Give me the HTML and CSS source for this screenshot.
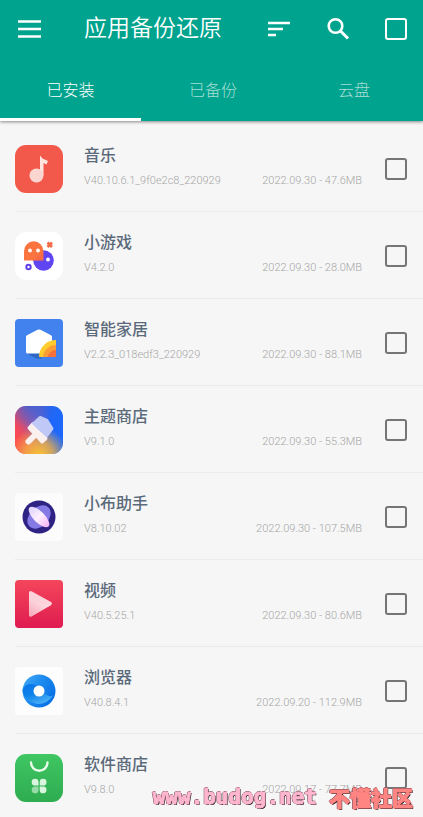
FILE: index.html
```html
<!DOCTYPE html>
<html lang="zh-CN">
<head>
<meta charset="utf-8">
<meta name="viewport" content="width=device-width, initial-scale=1">
<title>应用备份还原</title>
<link rel="stylesheet" href="styles.css">
</head>
<body>
<div class="app">
  <header class="header">
    <div class="toolbar">
      <button class="icon-button" type="button" aria-label="菜单">
        <svg viewBox="0 0 24 24" width="24" height="24"><path d="M1 4.500h23M1 12h23M1 19.500h23" stroke="#fff" stroke-width="2.600"/></svg>
      </button>
      <h1 class="title">应用备份还原</h1>
      <div class="actions">
        <button class="icon-button" type="button" aria-label="排序">
          <svg viewBox="0 0 24 24" width="24" height="24"><path d="M1 6h22M1 12h15M1 18h8" stroke="#fff" stroke-width="2.400"/></svg>
        </button>
        <button class="icon-button" type="button" aria-label="搜索">
          <svg viewBox="0 0 24 24" width="24" height="24" fill="none" stroke="#fff"><circle cx="9.500" cy="9" r="6.800" stroke-width="2.600"/><path d="M14.500 14l7.500 7.500" stroke-width="3"/></svg>
        </button>
        <input class="check check-light" type="checkbox" aria-label="全选">
      </div>
    </div>
    <nav class="tabs">
      <a class="tab tab-active" href="#installed">已安装</a>
      <a class="tab" href="#backup">已备份</a>
      <a class="tab" href="#cloud">云盘</a>
    </nav>
  </header>

  <ul class="list" id="installed">
    <li class="row">
      <svg class="app-icon" viewBox="0 0 48 48">
        <rect width="48" height="48" rx="11" fill="#f2594b"/>
        <path d="M25 30V10.500l2.500 3 5.500 2.500-1.500 3.500-3-1.500V30z" fill="#ffe5e0"/>
        <circle cx="21.500" cy="30.500" r="7" fill="#fbd5d0"/>
      </svg>
      <div class="info">
        <label class="name" for="app-1">音乐</label>
        <div class="meta"><span>V40.10.6.1_9f0e2c8_220929</span><span>2022.09.30 - 47.6MB</span></div>
      </div>
      <input class="check" type="checkbox" id="app-1">
    </li>
    <li class="row">
      <svg class="app-icon" viewBox="0 0 48 48">
        <rect width="48" height="48" rx="11" fill="#fff"/>
        <circle cx="28.500" cy="28.500" r="10.300" fill="#5f45f2"/>
        <path d="M9 28.500V19a9.700 9.700 0 0 1 19.400 0v9.500z" fill="#fb7440"/>
        <path d="M18.500 28.500h10v-9z" fill="#e85b52" opacity=".35"/>
        <circle cx="15" cy="18.500" r="1.900" fill="#fff"/><circle cx="23" cy="18.500" r="1.900" fill="#fff"/>
        <circle cx="33" cy="27.500" r="1.900" fill="#fff"/>
        <path d="M32.500 10.500l4.500 4.500M37 10.500l-4.500 4.500" stroke="#f36c48" stroke-width="2.800"/>
        <circle cx="13.500" cy="35" r="2.200" fill="none" stroke="#6240e8" stroke-width="2"/>
      </svg>
      <div class="info">
        <label class="name" for="app-2">小游戏</label>
        <div class="meta"><span>V4.2.0</span><span>2022.09.30 - 28.0MB</span></div>
      </div>
      <input class="check" type="checkbox" id="app-2">
    </li>
    <li class="row">
      <svg class="app-icon" viewBox="0 0 48 48">
        <rect width="48" height="48" rx="4" fill="#4182ef"/>
        <path d="M12 34.500l9 5h6l-2-6z" fill="#2f67c4"/>
        <path d="M11 18q0-1 1-1.700l10.500-5.500q1.500-.8 3 0L36 16.300q1 .7 1 1.700v16.500H12.500q-1.500 0-1.500-1.500z" fill="#fff"/>
        <path d="M24 38a17 17 0 0 1 17-17v17z" fill="#fdcc2e"/>
        <path d="M28 38a13 13 0 0 1 13-12v12z" fill="#fb9d37"/>
        <path d="M32.500 38a8.500 8.500 0 0 1 8.500-7v7z" fill="#f4713c"/>
      </svg>
      <div class="info">
        <label class="name" for="app-3">智能家居</label>
        <div class="meta"><span>V2.2.3_018edf3_220929</span><span>2022.09.30 - 88.1MB</span></div>
      </div>
      <input class="check" type="checkbox" id="app-3">
    </li>
    <li class="row">
      <svg class="app-icon" viewBox="0 0 48 48">
        <defs>
          <linearGradient id="theme-base" x1="0" y1=".4" x2="1" y2=".3"><stop offset="0" stop-color="#f5455c"/><stop offset=".45" stop-color="#7a62c4"/><stop offset=".75" stop-color="#1d68fb"/></linearGradient>
          <radialGradient id="theme-yellow" cx=".5" cy="1.050" r=".62"><stop offset="0" stop-color="#ffc52b"/><stop offset=".5" stop-color="#fbb43b" stop-opacity=".75"/><stop offset="1" stop-color="#fbb43b" stop-opacity="0"/></radialGradient>
          <radialGradient id="theme-blue" cx=".35" cy="-.1" r=".6"><stop offset="0" stop-color="#3e60d0"/><stop offset="1" stop-color="#3e60d0" stop-opacity="0"/></radialGradient>
          <radialGradient id="theme-red" cx="0" cy=".75" r=".5"><stop offset="0" stop-color="#fb4a50"/><stop offset="1" stop-color="#fb4a50" stop-opacity="0"/></radialGradient>
        </defs>
        <rect width="48" height="48" rx="11" fill="url(#theme-base)"/>
        <rect width="48" height="48" rx="11" fill="url(#theme-blue)"/>
        <rect width="48" height="48" rx="11" fill="url(#theme-red)"/>
        <rect width="48" height="48" rx="11" fill="url(#theme-yellow)"/>
        <path d="M20 29l-6.500 6.500" stroke="#fbf0ee" stroke-width="6" stroke-linecap="round"/>
        <path d="M14 22l4-4.500 13 15-4 3.500z" fill="#fbf0ee" stroke="#fbf0ee" stroke-width="3" stroke-linejoin="round"/>
        <path d="M18.500 17.500l6.500-6 7 3 5 8-6 8z" fill="#bfc8f7" stroke="#bfc8f7" stroke-width="3" stroke-linejoin="round"/>
        <path d="M15.500 19.500l15 13.500" stroke="#fbf0ee" stroke-width="4"/>
      </svg>
      <div class="info">
        <label class="name" for="app-4">主题商店</label>
        <div class="meta"><span>V9.1.0</span><span>2022.09.30 - 55.3MB</span></div>
      </div>
      <input class="check" type="checkbox" id="app-4">
    </li>
    <li class="row">
      <svg class="app-icon" viewBox="0 0 48 48">
        <defs><linearGradient id="orbit" x1="0" y1="0" x2="1" y2="0"><stop offset="0" stop-color="#dcd2ff"/><stop offset=".5" stop-color="#fff0ff"/><stop offset="1" stop-color="#f4b5f5"/></linearGradient></defs>
        <rect width="48" height="48" rx="4" fill="#fcfcfd"/>
        <circle cx="24" cy="24" r="16.500" fill="#2e2383"/>
        <ellipse cx="24" cy="24" rx="13.500" ry="9.500" transform="rotate(-45 24 24)" fill="#8579e6"/>
        <ellipse cx="24" cy="24" rx="13.500" ry="5.600" transform="rotate(45 24 24)" fill="url(#orbit)"/>
      </svg>
      <div class="info">
        <label class="name" for="app-5">小布助手</label>
        <div class="meta"><span>V8.10.02</span><span>2022.09.30 - 107.5MB</span></div>
      </div>
      <input class="check" type="checkbox" id="app-5">
    </li>
    <li class="row">
      <svg class="app-icon" viewBox="0 0 48 48">
        <defs>
          <linearGradient id="video" x1="0" y1="0" x2="0" y2="1"><stop offset="0" stop-color="#f4465b"/><stop offset="1" stop-color="#df1c50"/></linearGradient>
          <linearGradient id="play" x1="0" y1="1" x2="1" y2="0"><stop offset="0" stop-color="#f8a9b8"/><stop offset="1" stop-color="#ffeef0"/></linearGradient>
        </defs>
        <rect width="48" height="48" rx="4" fill="url(#video)"/>
        <path d="M14 13q0-3 3-1.500L36 22q2 1.500 0 3L17 36q-3 1.500-3-1.500z" fill="#fbd3d9"/>
        <path d="M14 21q4-2 8 1t14 3L17 36q-3 1.500-3-1.500z" fill="url(#play)"/>
      </svg>
      <div class="info">
        <label class="name" for="app-6">视频</label>
        <div class="meta"><span>V40.5.25.1</span><span>2022.09.30 - 80.6MB</span></div>
      </div>
      <input class="check" type="checkbox" id="app-6">
    </li>
    <li class="row">
      <svg class="app-icon" viewBox="0 0 48 48">
        <defs>
          <linearGradient id="ring" x1="0" y1="0" x2="1" y2=".6"><stop offset="0" stop-color="#48acf4"/><stop offset=".5" stop-color="#1e8cef"/><stop offset="1" stop-color="#0870e5"/></linearGradient>
          <linearGradient id="wave" x1="0" y1="0" x2=".6" y2="1"><stop offset="0" stop-color="#0a74e6"/><stop offset=".5" stop-color="#0f82ea"/><stop offset="1" stop-color="#49aef5"/></linearGradient>
        </defs>
        <rect width="48" height="48" rx="3" fill="#fdfdfe"/>
        <circle cx="24" cy="24" r="16.500" fill="url(#ring)"/>
        <path d="M7.500 24c1-7 9-9 15-5s10 13 15.500 9.500A16.500 16.500 0 0 1 7.500 24z" fill="url(#wave)"/>
        <circle cx="24" cy="24" r="5.500" fill="#fff"/>
      </svg>
      <div class="info">
        <label class="name" for="app-7">浏览器</label>
        <div class="meta"><span>V40.8.4.1</span><span>2022.09.20 - 112.9MB</span></div>
      </div>
      <input class="check" type="checkbox" id="app-7">
    </li>
    <li class="row">
      <svg class="app-icon" viewBox="0 0 48 48">
        <defs><linearGradient id="store" x1="0" y1="0" x2="0" y2="1"><stop offset="0" stop-color="#40c663"/><stop offset="1" stop-color="#2eac50"/></linearGradient></defs>
        <rect width="48" height="48" rx="11" fill="url(#store)"/>
        <path d="M16 8.500a8 8 0 0 0 16.500 0" fill="none" stroke="#e8fbe9" stroke-width="2.400" stroke-linecap="round"/>
        <path d="M23.500 31.500h-3a3.400 3.400 0 1 1 3-3.400zM24.700 31.500v-3.400a3.400 3.400 0 1 1 3 3.400zM24.700 32.500h3a3.400 3.400 0 1 1-3 3.400z" fill="#d9f5dd"/>
        <path d="M23.500 32.500v3.400a3.400 3.400 0 1 1-3-3.400z" fill="#98dba8"/>
      </svg>
      <div class="info">
        <label class="name" for="app-8">软件商店</label>
        <div class="meta"><span>V9.8.0</span><span>2022.09.17 - 77.7MB</span></div>
      </div>
      <input class="check" type="checkbox" id="app-8">
    </li>
  </ul>
  <div class="watermark"><span>www.budog.net</span><span class="watermark-name">不懂社区</span></div>
</div>
</body>
</html>
```

FILE: styles.css
```css
* {
  box-sizing: border-box;
}

body {
  margin: 0;
  background: #f6f6f6;
  font-family: Roboto, "Noto Sans CJK SC", sans-serif;
}

.app {
  display: flex;
  flex-direction: column;
  height: 100vh;
  overflow: hidden;
}

.header {
  flex: none;
  background: #00a38d;
  box-shadow: 0 1px 3px rgba(0, 0, 0, 0.45);
}

.toolbar {
  display: flex;
  align-items: center;
  height: 57px;
  padding: 0 16px 0 17px;
}

.icon-button {
  display: flex;
  padding: 0;
  border: 0;
  background: none;
}

.title {
  margin: 0 0 0 43px;
  color: #fff;
  font-size: 23px;
  font-weight: 350;
  line-height: 32px;
}

.actions {
  display: flex;
  align-items: center;
  gap: 35px;
  margin-left: auto;
}

.tabs {
  display: grid;
  grid-template-columns: 47fr 48fr 46fr;
  height: 64px;
}

.tab {
  padding-top: 22px;
  border-bottom: 3px solid transparent;
  color: #a6ded6;
  font-size: 16px;
  font-weight: 300;
  line-height: 24px;
  text-align: center;
  text-decoration: none;
}

.tab-active {
  border-bottom-color: #fff;
  color: #fff;
}

.list {
  flex: 1;
  min-height: 0;
  margin: 0;
  padding: 4px 0 0;
  overflow: hidden;
  list-style: none;
}

.row {
  display: flex;
  align-items: center;
  height: 87px;
  padding-top: 1px;
  margin-left: 15px;
  padding-right: 16px;
  border-bottom: 1px solid #ebebeb;
}

.app-icon {
  flex: none;
  width: 48px;
  height: 48px;
}

.info {
  flex: 1;
  min-width: 0;
  margin: 0 23px 0 21px;
}

.name {
  display: block;
  color: #5b6a7a;
  font-size: 16px;
  font-weight: 500;
  line-height: 24px;
}

.meta {
  display: flex;
  justify-content: space-between;
  color: #a6a6a6;
  font-size: 11px;
  font-weight: 300;
  line-height: 26px;
  white-space: nowrap;
}

.check {
  flex: none;
  width: 22px;
  height: 22px;
  margin: 0;
  border: 2px solid #757575;
  border-radius: 3px;
  appearance: none;
}

.check-light {
  border-color: #fff;
}

.watermark {
  position: fixed;
  right: 10px;
  bottom: 6px;
  display: flex;
  align-items: center;
  gap: 12px;
  color: #ffb6cf;
  font-family: "DejaVu Sans Mono", monospace;
  font-size: 21px;
  font-weight: 700;
  line-height: 28px;
  -webkit-text-stroke: 1px currentColor;
  text-shadow: 1px 1px #21151a, -1px 0 #6b4050, 0 -1px #6b4050;
  pointer-events: none;
}

.watermark-name {
  color: #ff8583;
  font-family: "Noto Sans CJK SC", sans-serif;
  font-weight: 900;
}
```
